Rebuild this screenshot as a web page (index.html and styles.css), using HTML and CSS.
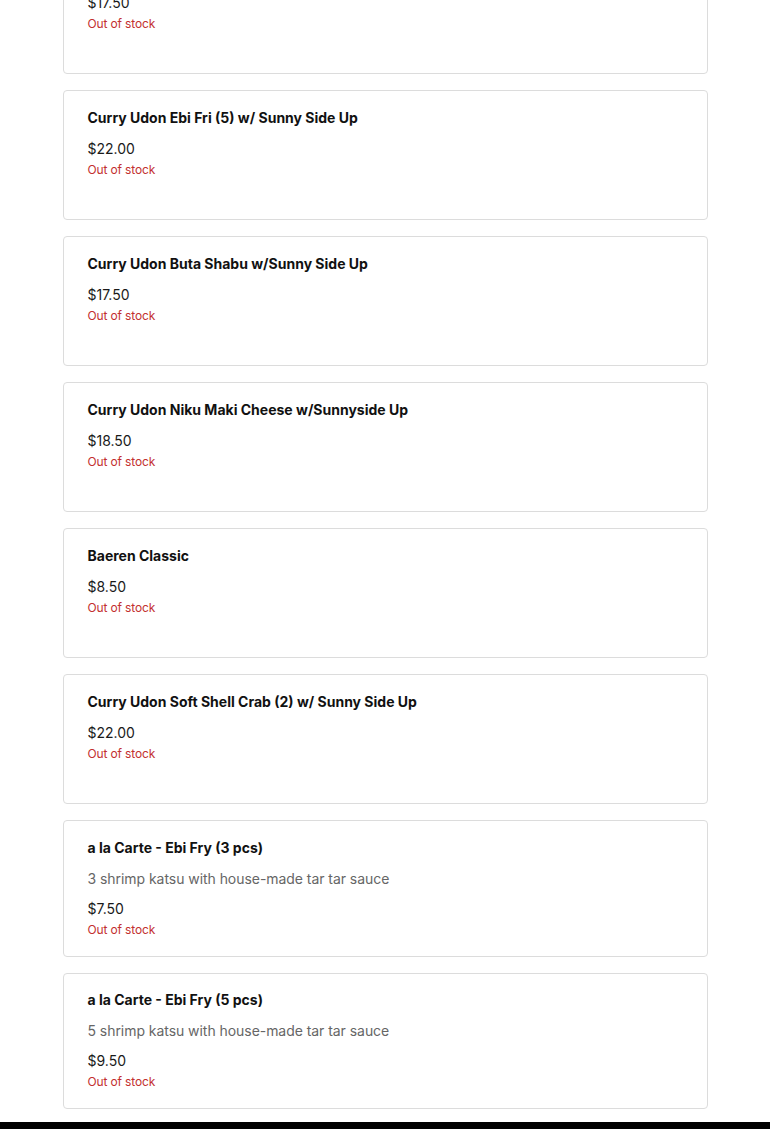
FILE: index.html
```html
<!DOCTYPE html>
<html>
<head>
<meta charset="utf-8">
<link rel="stylesheet" href="styles.css">
</head>
<body>
<main class="menu">
  <div class="card">
    <div class="title">Curry Udon Buta Shabu w/ Sunny Side Up</div>
    <div class="price">$17.50</div>
    <div class="stock">Out of stock</div>
  </div>
  <div class="card">
    <div class="title">Curry Udon Ebi Fri (5) w/ Sunny Side Up</div>
    <div class="price">$22.00</div>
    <div class="stock">Out of stock</div>
  </div>
  <div class="card">
    <div class="title">Curry Udon Buta Shabu w/Sunny Side Up</div>
    <div class="price">$17.50</div>
    <div class="stock">Out of stock</div>
  </div>
  <div class="card">
    <div class="title">Curry Udon Niku Maki Cheese w/Sunnyside Up</div>
    <div class="price">$18.50</div>
    <div class="stock">Out of stock</div>
  </div>
  <div class="card">
    <div class="title">Baeren Classic</div>
    <div class="price">$8.50</div>
    <div class="stock">Out of stock</div>
  </div>
  <div class="card">
    <div class="title">Curry Udon Soft Shell Crab (2) w/ Sunny Side Up</div>
    <div class="price">$22.00</div>
    <div class="stock">Out of stock</div>
  </div>
  <div class="card">
    <div class="title">a la Carte - Ebi Fry (3 pcs)</div>
    <div class="desc">3 shrimp katsu with house-made tar tar sauce</div>
    <div class="price">$7.50</div>
    <div class="stock">Out of stock</div>
  </div>
  <div class="card card-tight">
    <div class="title">a la Carte - Ebi Fry (5 pcs)</div>
    <div class="desc">5 shrimp katsu with house-made tar tar sauce</div>
    <div class="price">$9.50</div>
    <div class="stock">Out of stock</div>
  </div>
</main>
<footer class="footer"></footer>
</body>
</html>
```
FILE: styles.css
```css
html, body {
  margin: 0;
  padding: 0;
  background: #fff;
  font-family: Inter, "Noto Sans", sans-serif;
}
.menu {
  width: 645px;
  margin: -56px auto 0;
  display: flex;
  flex-direction: column;
  gap: 16px;
  padding-bottom: 13px;
}
.card {
  box-sizing: border-box;
  min-height: 130px;
  border: 1px solid #dcdcdc;
  border-radius: 4px;
  padding: 17px 24px 18px;
  display: flex;
  flex-direction: column;
}
.card-tight {
  padding-top: 16px;
}
.title {
  font-size: 14px;
  line-height: 20px;
  font-weight: 700;
  color: #111;
}
.desc {
  margin-top: 11px;
  font-size: 14px;
  line-height: 20px;
  color: #666;
  letter-spacing: -0.05px;
}
.price {
  margin-top: 11px;
  font-size: 14px;
  line-height: 20px;
  color: #1a1a1a;
}
.desc + .price {
  margin-top: 10px;
}
.stock {
  margin-top: 3px;
  font-size: 12px;
  line-height: 16px;
  color: #c3302f;
  letter-spacing: -0.15px;
}
.footer {
  background: #000;
  height: 40px;
}
```
